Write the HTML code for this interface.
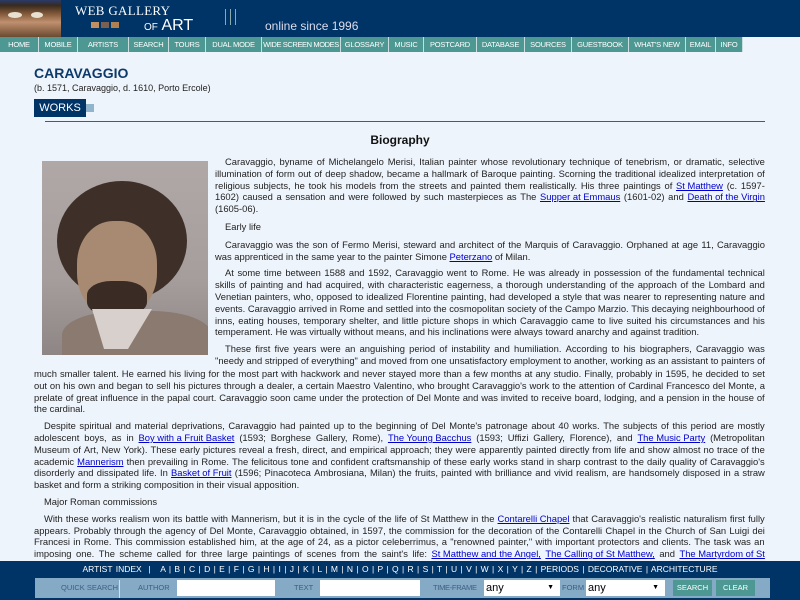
<!DOCTYPE html>
<html><head><meta charset="utf-8"><style>
*{margin:0;padding:0;box-sizing:border-box}
body{width:800px;height:600px;overflow:hidden;background:#eef4fc;font-family:"Liberation Sans",Arial,sans-serif;position:relative}
.hdr{position:absolute;left:0;top:0;width:800px;height:37px;background:#003366}
.nav{position:absolute;left:0;top:37px;width:800px;height:15px;background:#eef4fc}
.nav span{position:absolute;top:0;height:15px;background:#4e9893;color:#fff;font-size:7.5px;line-height:15px;text-align:center;border-right:1px solid #c8dede;white-space:nowrap;overflow:hidden;letter-spacing:-0.2px}
.abs{position:absolute}
.t{position:absolute;font-size:9.4px;line-height:11.8px;color:#222}
.t div{display:flex;justify-content:space-between;white-space:nowrap}
.t div.l{display:block}
a{color:#0000cc;text-decoration:underline}
.foot{position:absolute;left:0;top:561px;width:800px;height:39px;background:#003366}
.sr{position:absolute;left:35px;top:578px;width:735px;height:20px;background:#85aac6}
.sr span{position:absolute;top:0;line-height:20px;font-size:7.5px;color:#3c5f80;white-space:nowrap}
.inp{position:absolute;top:2px;height:16px;background:#fff}
.btn{position:absolute;top:2px;height:16px;background:#4e9893;color:#fff;font-size:7.5px;line-height:16px;text-align:center}
</style></head><body>
<div class="hdr">
 <div class="abs" style="left:0;top:0;width:61px;height:37px;background:linear-gradient(180deg,#2a3a6a 0%,#3a2a1c 15%,#8a6040 40%,#c09070 60%,#6a4a30 100%)"></div>
 <div class="abs" style="left:8px;top:12px;width:14px;height:6px;border-radius:50%;background:#e8e0d0"></div>
 <div class="abs" style="left:31px;top:12px;width:12px;height:6px;border-radius:50%;background:#e8e0d0"></div>
 <div class="abs" style="left:75px;top:3px;color:#fff;font-family:'Liberation Serif',serif;font-size:13px;letter-spacing:0.3px">WEB GALLERY</div>
 <div class="abs" style="left:91px;top:22px;width:8px;height:6px;background:#c09060"></div>
 <div class="abs" style="left:101px;top:22px;width:8px;height:6px;background:#7a6050"></div>
 <div class="abs" style="left:111px;top:22px;width:8px;height:6px;background:#b08050"></div>
 <div class="abs" style="left:144px;top:17px;color:#fff;font-size:16px"><span style="font-size:10px">OF</span> ART</div>
 <div class="abs" style="left:225px;top:9px;width:1px;height:16px;background:#8aa"></div>
 <div class="abs" style="left:230px;top:9px;width:1px;height:16px;background:#8aa"></div>
 <div class="abs" style="left:235px;top:9px;width:1px;height:16px;background:#8aa"></div>
 <div class="abs" style="left:265px;top:19px;color:#dde;font-size:12px">online since 1996</div>
</div>
<div class="nav">
<span style="left:0;width:39px">HOME</span><span style="left:39px;width:39px">MOBILE</span><span style="left:78px;width:51px">ARTISTS</span><span style="left:129px;width:40px">SEARCH</span><span style="left:169px;width:37px">TOURS</span><span style="left:206px;width:56px">DUAL MODE</span><span style="left:262px;width:79px;letter-spacing:-0.4px">WIDE SCREEN MODES</span><span style="left:341px;width:48px">GLOSSARY</span><span style="left:389px;width:35px">MUSIC</span><span style="left:424px;width:53px">POSTCARD</span><span style="left:477px;width:48px">DATABASE</span><span style="left:525px;width:47px">SOURCES</span><span style="left:572px;width:57px">GUESTBOOK</span><span style="left:629px;width:57px">WHAT'S NEW</span><span style="left:686px;width:30px">EMAIL</span><span style="left:716px;width:27px">INFO</span>
</div>
<div class="abs" style="left:34px;top:65px;font-size:14px;font-weight:bold;color:#0d3a6a">CARAVAGGIO</div>
<div class="abs" style="left:34px;top:83px;font-size:9px;color:#222">(b. 1571, Caravaggio, d. 1610, Porto Ercole)</div>
<div class="abs" style="left:34px;top:99px;width:52px;height:18px;background:#003366;color:#fff;font-size:11px;line-height:18px;text-align:center">WORKS</div>
<div class="abs" style="left:86px;top:104px;width:8px;height:8px;background:#8fb4cc"></div>
<div class="abs" style="left:45px;top:121px;width:720px;height:1px;background:#556"></div>
<div class="abs" style="left:0;top:133px;width:800px;text-align:center;font-size:12px;font-weight:bold;color:#111">Biography</div>
<div class="abs" style="left:42px;top:161px;width:166px;height:194px;overflow:hidden;background:linear-gradient(180deg,#b0a8a6,#a69e9c 60%,#8e8684)">
 <div class="abs" style="left:15px;top:20px;width:130px;height:120px;border-radius:50%;background:#3e3028"></div>
 <div class="abs" style="left:35px;top:60px;width:80px;height:95px;border-radius:45%;background:#a88a72"></div>
 <div class="abs" style="left:45px;top:120px;width:60px;height:35px;border-radius:40%;background:#3a2c24"></div>
 <div class="abs" style="left:20px;top:150px;width:150px;height:60px;border-radius:40% 40% 0 0;background:#8a7a70"></div>
 <div class="abs" style="left:50px;top:148px;width:60px;height:40px;background:#d8d0cc;clip-path:polygon(0 0,100% 0,60% 100%,20% 100%)"></div>
</div>

<div class="t" style="left:215px;top:156px;width:550px">
<div><span style="padding-left:10px">Caravaggio,</span><span>byname</span><span>of</span><span>Michelangelo</span><span>Merisi,</span><span>Italian</span><span>painter</span><span>whose</span><span>revolutionary</span><span>technique</span><span>of</span><span>tenebrism,</span><span>or</span><span>dramatic,</span><span>selective</span></div>
<div><span>illumination</span><span>of</span><span>form</span><span>out</span><span>of</span><span>deep</span><span>shadow,</span><span>became</span><span>a</span><span>hallmark</span><span>of</span><span>Baroque</span><span>painting.</span><span>Scorning</span><span>the</span><span>traditional</span><span>idealized</span><span>interpretation</span><span>of</span></div>
<div><span>religious</span><span>subjects,</span><span>he</span><span>took</span><span>his</span><span>models</span><span>from</span><span>the</span><span>streets</span><span>and</span><span>painted</span><span>them</span><span>realistically.</span><span>His</span><span>three</span><span>paintings</span><span>of</span><a>St Matthew</a><span>(c.</span><span>1597-</span></div>
<div><span>1602)</span><span>caused</span><span>a</span><span>sensation</span><span>and</span><span>were</span><span>followed</span><span>by</span><span>such</span><span>masterpieces</span><span>as</span><span>The</span><a>Supper at Emmaus</a><span>(1601-02)</span><span>and</span><a>Death of the Virgin</a></div>
<div class="l">(1605-06).</div>
<div class="l" style="margin-top:6px;padding-left:10px">Early life</div>
<div style="margin-top:6px"><span style="padding-left:10px">Caravaggio</span><span>was</span><span>the</span><span>son</span><span>of</span><span>Fermo</span><span>Merisi,</span><span>steward</span><span>and</span><span>architect</span><span>of</span><span>the</span><span>Marquis</span><span>of</span><span>Caravaggio.</span><span>Orphaned</span><span>at</span><span>age</span><span>11,</span><span>Caravaggio</span></div>
<div class="l">was apprenticed in the same year to the painter Simone <a>Peterzano</a> of Milan.</div>
<div style="margin-top:5px"><span style="padding-left:10px">At</span><span>some</span><span>time</span><span>between</span><span>1588</span><span>and</span><span>1592,</span><span>Caravaggio</span><span>went</span><span>to</span><span>Rome.</span><span>He</span><span>was</span><span>already</span><span>in</span><span>possession</span><span>of</span><span>the</span><span>fundamental</span><span>technical</span></div>
<div><span>skills</span><span>of</span><span>painting</span><span>and</span><span>had</span><span>acquired,</span><span>with</span><span>characteristic</span><span>eagerness,</span><span>a</span><span>thorough</span><span>understanding</span><span>of</span><span>the</span><span>approach</span><span>of</span><span>the</span><span>Lombard</span><span>and</span></div>
<div><span>Venetian</span><span>painters,</span><span>who,</span><span>opposed</span><span>to</span><span>idealized</span><span>Florentine</span><span>painting,</span><span>had</span><span>developed</span><span>a</span><span>style</span><span>that</span><span>was</span><span>nearer</span><span>to</span><span>representing</span><span>nature</span><span>and</span></div>
<div><span>events.</span><span>Caravaggio</span><span>arrived</span><span>in</span><span>Rome</span><span>and</span><span>settled</span><span>into</span><span>the</span><span>cosmopolitan</span><span>society</span><span>of</span><span>the</span><span>Campo</span><span>Marzio.</span><span>This</span><span>decaying</span><span>neighbourhood</span><span>of</span></div>
<div><span>inns,</span><span>eating</span><span>houses,</span><span>temporary</span><span>shelter,</span><span>and</span><span>little</span><span>picture</span><span>shops</span><span>in</span><span>which</span><span>Caravaggio</span><span>came</span><span>to</span><span>live</span><span>suited</span><span>his</span><span>circumstances</span><span>and</span><span>his</span></div>
<div class="l">temperament. He was virtually without means, and his inclinations were always toward anarchy and against tradition.</div>
<div style="margin-top:5px"><span style="padding-left:10px">These</span><span>first</span><span>five</span><span>years</span><span>were</span><span>an</span><span>anguishing</span><span>period</span><span>of</span><span>instability</span><span>and</span><span>humiliation.</span><span>According</span><span>to</span><span>his</span><span>biographers,</span><span>Caravaggio</span><span>was</span></div>
<div><span>"needy</span><span>and</span><span>stripped</span><span>of</span><span>everything"</span><span>and</span><span>moved</span><span>from</span><span>one</span><span>unsatisfactory</span><span>employment</span><span>to</span><span>another,</span><span>working</span><span>as</span><span>an</span><span>assistant</span><span>to</span><span>painters</span><span>of</span></div>
</div>

<div class="t" style="left:34px;top:368px;width:731px">
<div><span>much</span><span>smaller</span><span>talent.</span><span>He</span><span>earned</span><span>his</span><span>living</span><span>for</span><span>the</span><span>most</span><span>part</span><span>with</span><span>hackwork</span><span>and</span><span>never</span><span>stayed</span><span>more</span><span>than</span><span>a</span><span>few</span><span>months</span><span>at</span><span>any</span><span>studio.</span><span>Finally,</span><span>probably</span><span>in</span><span>1595,</span><span>he</span><span>decided</span><span>to</span><span>set</span></div>
<div><span>out</span><span>on</span><span>his</span><span>own</span><span>and</span><span>began</span><span>to</span><span>sell</span><span>his</span><span>pictures</span><span>through</span><span>a</span><span>dealer,</span><span>a</span><span>certain</span><span>Maestro</span><span>Valentino,</span><span>who</span><span>brought</span><span>Caravaggio's</span><span>work</span><span>to</span><span>the</span><span>attention</span><span>of</span><span>Cardinal</span><span>Francesco</span><span>del</span><span>Monte,</span><span>a</span></div>
<div><span>prelate</span><span>of</span><span>great</span><span>influence</span><span>in</span><span>the</span><span>papal</span><span>court.</span><span>Caravaggio</span><span>soon</span><span>came</span><span>under</span><span>the</span><span>protection</span><span>of</span><span>Del</span><span>Monte</span><span>and</span><span>was</span><span>invited</span><span>to</span><span>receive</span><span>board,</span><span>lodging,</span><span>and</span><span>a</span><span>pension</span><span>in</span><span>the</span><span>house</span><span>of</span></div>
<div class="l">the cardinal.</div>
<div style="margin-top:5px"><span style="padding-left:10px">Despite</span><span>spiritual</span><span>and</span><span>material</span><span>deprivations,</span><span>Caravaggio</span><span>had</span><span>painted</span><span>up</span><span>to</span><span>the</span><span>beginning</span><span>of</span><span>Del</span><span>Monte's</span><span>patronage</span><span>about</span><span>40</span><span>works.</span><span>The</span><span>subjects</span><span>of</span><span>this</span><span>period</span><span>are</span><span>mostly</span></div>
<div><span>adolescent</span><span>boys,</span><span>as</span><span>in</span><a>Boy with a Fruit Basket</a><span>(1593;</span><span>Borghese</span><span>Gallery,</span><span>Rome),</span><a>The Young Bacchus</a><span>(1593;</span><span>Uffizi</span><span>Gallery,</span><span>Florence),</span><span>and</span><a>The Music Party</a><span>(Metropolitan</span></div>
<div><span>Museum</span><span>of</span><span>Art,</span><span>New</span><span>York).</span><span>These</span><span>early</span><span>pictures</span><span>reveal</span><span>a</span><span>fresh,</span><span>direct,</span><span>and</span><span>empirical</span><span>approach;</span><span>they</span><span>were</span><span>apparently</span><span>painted</span><span>directly</span><span>from</span><span>life</span><span>and</span><span>show</span><span>almost</span><span>no</span><span>trace</span><span>of</span><span>the</span></div>
<div><span>academic</span><a>Mannerism</a><span>then</span><span>prevailing</span><span>in</span><span>Rome.</span><span>The</span><span>felicitous</span><span>tone</span><span>and</span><span>confident</span><span>craftsmanship</span><span>of</span><span>these</span><span>early</span><span>works</span><span>stand</span><span>in</span><span>sharp</span><span>contrast</span><span>to</span><span>the</span><span>daily</span><span>quality</span><span>of</span><span>Caravaggio's</span></div>
<div><span>disorderly</span><span>and</span><span>dissipated</span><span>life.</span><span>In</span><a>Basket of Fruit</a><span>(1596;</span><span>Pinacoteca</span><span>Ambrosiana,</span><span>Milan)</span><span>the</span><span>fruits,</span><span>painted</span><span>with</span><span>brilliance</span><span>and</span><span>vivid</span><span>realism,</span><span>are</span><span>handsomely</span><span>disposed</span><span>in</span><span>a</span><span>straw</span></div>
<div class="l">basket and form a striking composition in their visual apposition.</div>
<div class="l" style="margin-top:5px;padding-left:10px">Major Roman commissions</div>
<div style="margin-top:5px"><span style="padding-left:10px">With</span><span>these</span><span>works</span><span>realism</span><span>won</span><span>its</span><span>battle</span><span>with</span><span>Mannerism,</span><span>but</span><span>it</span><span>is</span><span>in</span><span>the</span><span>cycle</span><span>of</span><span>the</span><span>life</span><span>of</span><span>St</span><span>Matthew</span><span>in</span><span>the</span><a>Contarelli Chapel</a><span>that</span><span>Caravaggio's</span><span>realistic</span><span>naturalism</span><span>first</span><span>fully</span></div>
<div><span>appears.</span><span>Probably</span><span>through</span><span>the</span><span>agency</span><span>of</span><span>Del</span><span>Monte,</span><span>Caravaggio</span><span>obtained,</span><span>in</span><span>1597,</span><span>the</span><span>commission</span><span>for</span><span>the</span><span>decoration</span><span>of</span><span>the</span><span>Contarelli</span><span>Chapel</span><span>in</span><span>the</span><span>Church</span><span>of</span><span>San</span><span>Luigi</span><span>dei</span></div>
<div><span>Francesi</span><span>in</span><span>Rome.</span><span>This</span><span>commission</span><span>established</span><span>him,</span><span>at</span><span>the</span><span>age</span><span>of</span><span>24,</span><span>as</span><span>a</span><span>pictor</span><span>celeberrimus,</span><span>a</span><span>"renowned</span><span>painter,"</span><span>with</span><span>important</span><span>protectors</span><span>and</span><span>clients.</span><span>The</span><span>task</span><span>was</span><span>an</span></div>
<div><span>imposing</span><span>one.</span><span>The</span><span>scheme</span><span>called</span><span>for</span><span>three</span><span>large</span><span>paintings</span><span>of</span><span>scenes</span><span>from</span><span>the</span><span>saint's</span><span>life:</span><a>St Matthew and the Angel,</a><a>The Calling of St Matthew,</a><span>and</span><a>The Martyrdom of St</a></div>
</div>

<div class="foot">
 <div class="abs" style="left:0;top:2px;width:800px;text-align:center;color:#fff;font-size:8.5px;line-height:12px;word-spacing:1px">ARTIST INDEX &nbsp;| &nbsp; A | B | C | D | E | F | G | H | I | J | K | L | M | N | O | P | Q | R | S | T | U | V | W | X | Y | Z | PERIODS | DECORATIVE | ARCHITECTURE</div>
</div>
<div class="sr">
 <span style="left:26px">QUICK SEARCH</span>
 <div class="abs" style="left:84px;top:2px;width:1px;height:18px;background:#d0e0ec"></div>
 <span style="left:103px">AUTHOR</span>
 <div class="inp" style="left:142px;width:98px"></div>
 <span style="left:259px">TEXT</span>
 <div class="inp" style="left:285px;width:100px"></div>
 <span style="left:398px;letter-spacing:-0.3px">TIME-FRAME</span>
 <div class="inp" style="left:449px;width:76px;font-size:11px;line-height:16px;padding-left:2px;color:#000">any<span style="position:absolute;right:6px;top:0;font-size:7px;color:#000;line-height:16px">▼</span></div>
 <span style="left:527px">FORM</span>
 <div class="inp" style="left:551px;width:79px;font-size:11px;line-height:16px;padding-left:2px;color:#000">any<span style="position:absolute;right:6px;top:0;font-size:7px;color:#000;line-height:16px">▼</span></div>
 <div class="btn" style="left:638px;width:39px">SEARCH</div>
 <div class="btn" style="left:681px;width:39px">CLEAR</div>
</div>
</body></html>
